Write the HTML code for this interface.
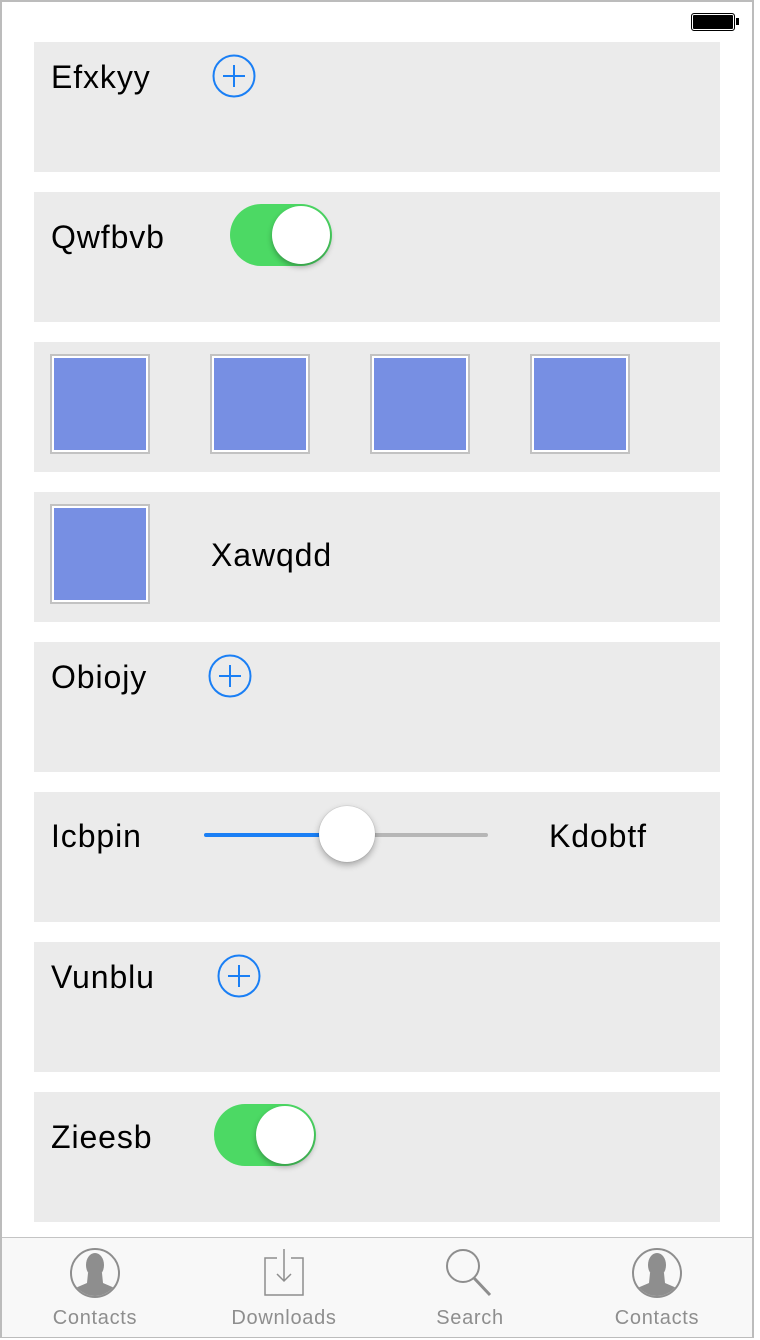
<!DOCTYPE html>
<html><head><style>
body{margin:0;width:760px;height:1340px;position:relative;background:#fff;font-family:"Liberation Sans",sans-serif;overflow:hidden}
.frame{position:absolute;left:0;top:0;width:750px;height:1334px;border:2px solid #bcbcbc}
.row{position:absolute;left:34px;width:686px;height:130px;background:#ebebeb}
.t{position:absolute;font-size:32px;letter-spacing:0.9px;color:#000;line-height:1}
.plus{position:absolute;width:44px;height:44px}
.tog{position:absolute;width:102px;height:62px;border-radius:31px;background:#4cd964}
.tog::after{content:"";position:absolute;right:2px;top:2px;width:58px;height:58px;border-radius:50%;background:#fff;box-shadow:0 3px 6px rgba(0,0,0,.3)}
.img{position:absolute;width:96px;height:96px;border:2px solid #c2c2c2;background:#fff}
.img::after{content:"";position:absolute;left:2px;top:2px;right:2px;bottom:2px;background:#778fe3}
.tab{position:absolute;left:2px;top:1237px;width:750px;height:99px;background:#f8f8f8;border-top:1px solid #c4c4c4}
.lbl{position:absolute;top:1307px;font-size:20px;letter-spacing:0.7px;color:#8e8e8e;width:180px;text-align:center}
</style></head><body>
<div class="frame"></div>
<div style="position:absolute;left:691px;top:13px;width:42px;height:16px;border:1px solid #000;border-radius:3px;background:#000;box-shadow:inset 0 0 0 1px #fff"></div>
<div style="position:absolute;left:736px;top:18px;width:3px;height:7px;background:#000"></div>

<div class="row" style="top:42px"></div>
<div class="t" style="left:51px;top:61px">Efxkyy</div>
<svg class="plus" style="left:212px;top:54px" viewBox="0 0 44 44"><circle cx="22" cy="22" r="20.5" fill="none" stroke="#1a7ff5" stroke-width="2"/><path d="M22 11V33M11 22H33" stroke="#1a7ff5" stroke-width="2"/></svg>

<div class="row" style="top:192px"></div>
<div class="t" style="left:51px;top:221px">Qwfbvb</div>
<div class="tog" style="left:230px;top:204px"></div>

<div class="row" style="top:342px"></div>
<div class="img" style="left:50px;top:354px"></div>
<div class="img" style="left:210px;top:354px"></div>
<div class="img" style="left:370px;top:354px"></div>
<div class="img" style="left:530px;top:354px"></div>

<div class="row" style="top:492px"></div>
<div class="img" style="left:50px;top:504px"></div>
<div class="t" style="left:211px;top:539px">Xawqdd</div>

<div class="row" style="top:642px"></div>
<div class="t" style="left:51px;top:661px">Obiojy</div>
<svg class="plus" style="left:208px;top:654px" viewBox="0 0 44 44"><circle cx="22" cy="22" r="20.5" fill="none" stroke="#1a7ff5" stroke-width="2"/><path d="M22 11V33M11 22H33" stroke="#1a7ff5" stroke-width="2"/></svg>

<div class="row" style="top:792px"></div>
<div class="t" style="left:51px;top:820px">Icbpin</div>
<div style="position:absolute;left:204px;top:833px;width:146px;height:4px;border-radius:2px;background:#1a7ff5"></div>
<div style="position:absolute;left:346px;top:833px;width:142px;height:4px;border-radius:2px;background:#b6b6b6"></div>
<div style="position:absolute;left:319px;top:806px;width:56px;height:56px;border-radius:50%;background:#fff;box-shadow:0 3px 7px rgba(0,0,0,.3),0 0 1px rgba(0,0,0,.3)"></div>
<div class="t" style="left:549px;top:820px">Kdobtf</div>

<div class="row" style="top:942px"></div>
<div class="t" style="left:51px;top:961px">Vunblu</div>
<svg class="plus" style="left:217px;top:954px" viewBox="0 0 44 44"><circle cx="22" cy="22" r="20.5" fill="none" stroke="#1a7ff5" stroke-width="2"/><path d="M22 11V33M11 22H33" stroke="#1a7ff5" stroke-width="2"/></svg>

<div class="row" style="top:1092px"></div>
<div class="t" style="left:51px;top:1121px">Zieesb</div>
<div class="tog" style="left:214px;top:1104px"></div>

<div class="tab"></div>
<svg style="position:absolute;left:69px;top:1247px" width="52" height="52" viewBox="0 0 52 52"><ellipse cx="26" cy="26" rx="24" ry="24" fill="none" stroke="#8e8e8e" stroke-width="2"/><clipPath id="c1"><circle cx="26" cy="26" r="23"/></clipPath><g clip-path="url(#c1)" fill="#8e8e8e"><ellipse cx="26" cy="18" rx="9" ry="12"/><path d="M19 26L33 26L34 36L48 42L48 52L4 52L4 42L18 36Z"/></g></svg>
<svg style="position:absolute;left:263px;top:1247px" width="42" height="50" viewBox="0 0 42 50"><path d="M14 11H2V48H40V11H28" fill="none" stroke="#8e8e8e" stroke-width="1.5"/><path d="M21 2V34M14 27L21 34L28 27" fill="none" stroke="#8e8e8e" stroke-width="1.5"/></svg>
<svg style="position:absolute;left:444px;top:1247px" width="52" height="52" viewBox="0 0 52 52"><circle cx="19" cy="19" r="16" fill="none" stroke="#8e8e8e" stroke-width="2"/><path d="M30 31L46 48" stroke="#8e8e8e" stroke-width="3"/></svg>
<svg style="position:absolute;left:631px;top:1247px" width="52" height="52" viewBox="0 0 52 52"><ellipse cx="26" cy="26" rx="24" ry="24" fill="none" stroke="#8e8e8e" stroke-width="2"/><clipPath id="c2"><circle cx="26" cy="26" r="23"/></clipPath><g clip-path="url(#c2)" fill="#8e8e8e"><ellipse cx="26" cy="18" rx="9" ry="12"/><path d="M19 26L33 26L34 36L48 42L48 52L4 52L4 42L18 36Z"/></g></svg>
<div class="lbl" style="left:5px">Contacts</div>
<div class="lbl" style="left:194px">Downloads</div>
<div class="lbl" style="left:380px">Search</div>
<div class="lbl" style="left:567px">Contacts</div>
</body></html>
